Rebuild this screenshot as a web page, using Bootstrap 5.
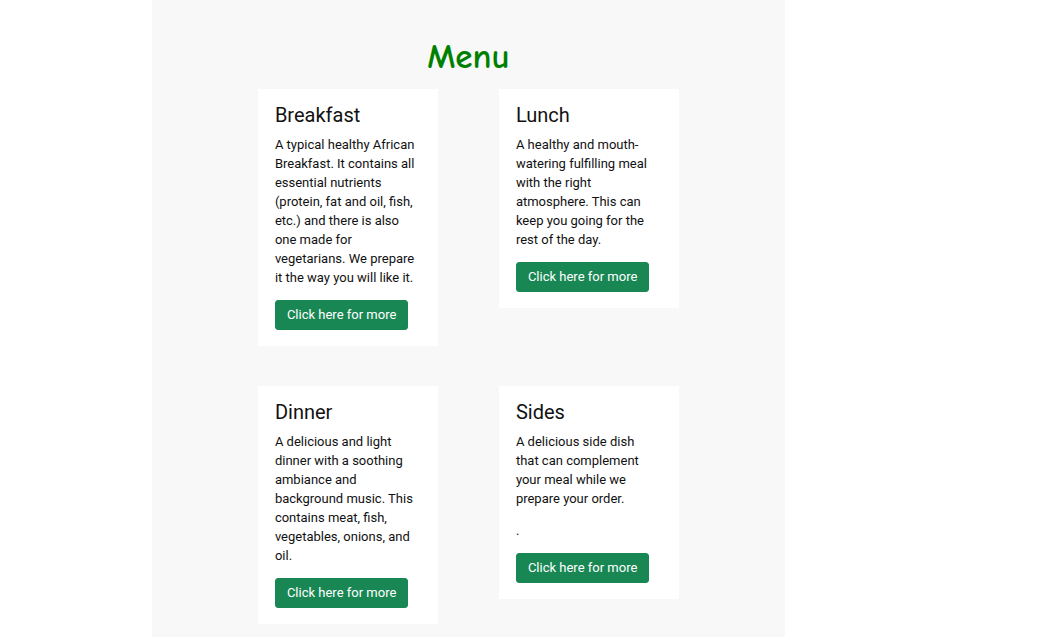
<!DOCTYPE html>
<html lang="en">
<head>
<meta charset="utf-8">
<meta name="viewport" content="width=device-width, initial-scale=1">
<title>Menu</title>
<link href="https://cdn.jsdelivr.net/npm/bootstrap@5.3.0/dist/css/bootstrap.min.css" rel="stylesheet">
<style>
body { font-family: Roboto, sans-serif; font-size: 13px; line-height: 19px; color: #111; background: #fff; }
.menu-page { width: calc(61% - 1px); margin-left: 152px; min-height: 100vh; background: #f8f8f8; padding: 37px 0 14px; }
.menu-title { font-family: "Comic Sans MS", "Comic Neue", cursive; font-size: 35px; line-height: 40px; font-weight: 700; color: #008000; margin-bottom: 12px; }
.menu-grid { display: grid; grid-template-columns: 180px 180px; column-gap: 61px; row-gap: 40px; justify-content: center; align-items: start; }
.menu-grid .card { border: 0; border-radius: 0; }
.menu-grid .card-body { padding: 15px 20px 16px 17px; }
.menu-grid .card-title { font-size: 20px; line-height: 22px; font-weight: 400; margin-bottom: 9px; }
.menu-grid .card-text { margin-bottom: 13px; }
.menu-grid .btn { --bs-btn-font-size: 13px; --bs-btn-line-height: 18px; --bs-btn-padding-x: 11px; --bs-btn-padding-y: 5px; --bs-btn-border-radius: 3px; display: block; width: fit-content; }
</style>
</head>
<body>
<main class="menu-page">
<h1 class="menu-title text-center">Menu</h1>
<div class="menu-grid">
<section class="card"><div class="card-body"><h2 class="card-title">Breakfast</h2><p class="card-text">A typical healthy African Breakfast. It contains all essential nutrients (protein, fat and oil, fish, etc.) and there is also one made for vegetarians. We prepare it the way you will like it.</p><a href="#" class="btn btn-success">Click here for more</a></div></section>
<section class="card"><div class="card-body"><h2 class="card-title">Lunch</h2><p class="card-text">A healthy and mouth-watering fulfilling meal with the right atmosphere. This can keep you going for the rest of the day.</p><a href="#" class="btn btn-success">Click here for more</a></div></section>
<section class="card"><div class="card-body"><h2 class="card-title">Dinner</h2><p class="card-text">A delicious and light dinner with a soothing ambiance and background music. This contains meat, fish, vegetables, onions, and oil.</p><a href="#" class="btn btn-success">Click here for more</a></div></section>
<section class="card"><div class="card-body"><h2 class="card-title">Sides</h2><p class="card-text">A delicious side dish that can complement your meal while we prepare your order.</p><p class="card-text">.</p><a href="#" class="btn btn-success">Click here for more</a></div></section>
</div>
</main>
<script src="https://cdn.jsdelivr.net/npm/bootstrap@5.3.0/dist/js/bootstrap.bundle.min.js"></script>
</body>
</html>
